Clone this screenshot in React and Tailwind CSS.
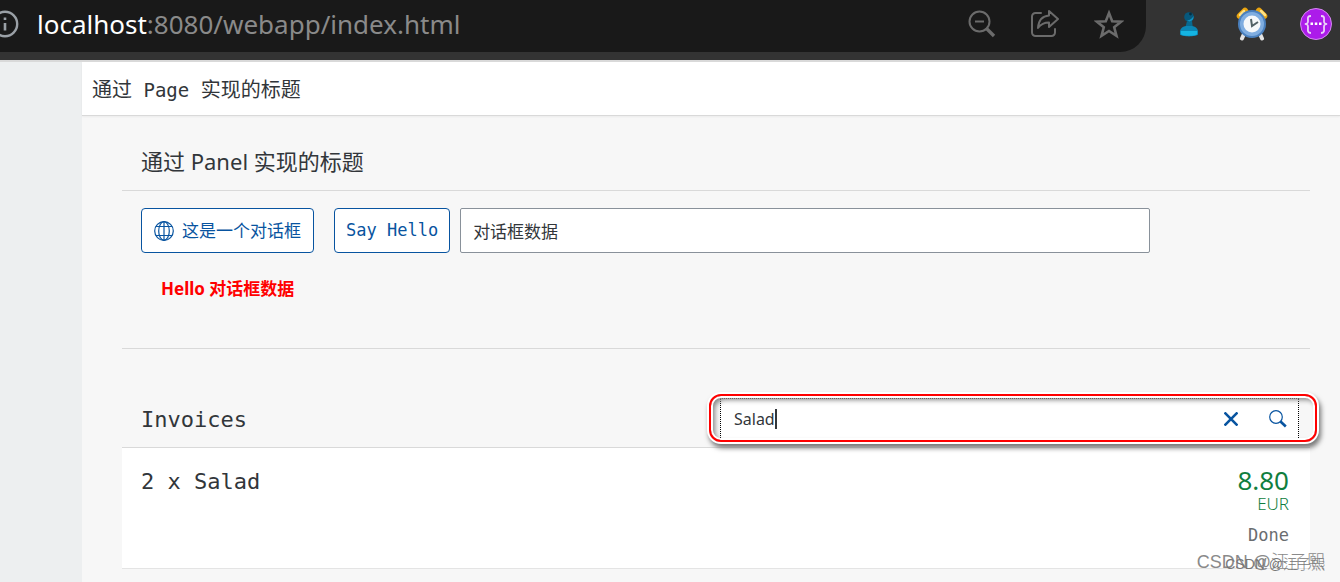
import { useState } from 'react';

const InfoIcon = () => (
  <svg viewBox="0 0 28 28" className="h-7 w-7 shrink-0" fill="none" stroke="#9aa0a6" strokeWidth="2.4">
    <circle cx="14" cy="14" r="12.2" />
    <path d="M14 13v7.5M14 7.5v2.6" strokeWidth="2.6" />
  </svg>
);

const ZoomOutIcon = () => (
  <svg viewBox="0 0 28 28" className="h-7 w-7" fill="none" stroke="#6b6b6b" strokeWidth="2">
    <circle cx="11.5" cy="11.5" r="10" />
    <path d="M7 11.5h9" />
    <path d="M18.5 18.5l7.5 7.5" strokeWidth="3.4" />
  </svg>
);

const ShareIcon = () => (
  <svg viewBox="0 0 28 28" className="h-7 w-7" fill="none" stroke="#6b6b6b" strokeWidth="2" strokeLinejoin="round" strokeLinecap="round">
    <path d="M10 3H4.500a3.500 3.500 0 0 0-3.500 3.500v16A3.500 3.500 0 0 0 4.500 26h16a3.500 3.500 0 0 0 3.500-3.500V19" />
    <path d="M18 1l9 8-9 8v-4.500c-5 0-8 1.500-11 5.500 .5-7.500 4.500-12 11-12.500z" />
  </svg>
);

const StarIcon = () => (
  <svg viewBox="0 0 30 30" className="h-[30px] w-[30px]" fill="none" stroke="#6b6b6b" strokeWidth="2.6">
    <path d="M15 4l3.200 8.200 8.800.5-6.800 5.600 2.300 8.600L15 22l-7.500 4.900 2.300-8.600L3 12.700l8.800-.5z" />
  </svg>
);

const StampIcon = () => (
  <svg viewBox="0 0 20 26" className="h-[26px] w-5">
    <path d="M8 10h5l1 8H6z" fill="#086a90" />
    <circle cx="10" cy="6" r="4.8" fill="#07587c" />
    <path d="M10 10.500c3 0 5-2.500 4.500-5.500-1.500 2.500-3 4-6.500 4.500z" fill="#0f94c4" />
    <circle cx="11.5" cy="3" r="1.4" fill="#043044" />
    <path d="M1 20c.5-3 3-4.500 6-5h6c3 .5 5.500 2 6 5v3.500c-2 2.500-16 2.500-18 0z" fill="#0b86b4" />
    <path d="M2 20h16v3.500c-3 1.800-13 1.800-16 0z" fill="#14b4e2" />
  </svg>
);

const ClockIcon = () => (
  <svg viewBox="0 0 32 34" className="h-[34px] w-8">
    <path d="M8 27l-2 4.500M24 27l2 4.500" stroke="#e4e4e4" strokeWidth="4" strokeLinecap="round" />
    <path d="M4 9l5-5M23 4l5 5" stroke="#eba50f" strokeWidth="6.5" strokeLinecap="round" />
    <path d="M4 8l4-4M25 4l4 4" stroke="#ffe184" strokeWidth="2.5" strokeLinecap="round" />
    <circle cx="16" cy="17" r="14" fill="#4a80be" />
    <circle cx="16" cy="17" r="12" fill="#7fade0" />
    <circle cx="16" cy="17" r="8.5" fill="#f5f8fa" />
    <path d="M15 12l1 7 6-4" fill="none" stroke="#526266" strokeWidth="2" />
  </svg>
);

const BracesIcon = () => (
  <svg viewBox="0 0 32 32" className="h-8 w-8">
    <circle cx="16" cy="16" r="15.5" fill="#ac1bea" stroke="#d58bee" />
    <path d="M11 8c-4 0-3 2-3 5s-1 2.500-3 3c2 .5 3 0 3 3s-1 6 3 6M21 8c4 0 3 2 3 5s1 2.500 3 3c-2 .5-3 0-3 3s1 6-3 6" fill="none" stroke="#ead0f8" strokeWidth="1.8" />
    <path d="M10.500 14.500h2.500v2.500h-2.500zM14.800 14.500h2.500v2.500h-2.500zM19 14.500h2.500v2.500h-2.500z" fill="#fff" />
  </svg>
);

const GlobeIcon = () => (
  <svg viewBox="0 0 20 20" className="h-5 w-5" fill="none" stroke="#0854a0" strokeWidth="1.2">
    <circle cx="10" cy="10" r="9.3" />
    <ellipse cx="10" cy="10" rx="5.3" ry="9.3" />
    <path d="M10 .7v18.600M1.800 5.500h16.400M1.800 14.500h16.400" />
  </svg>
);

const SearchIcon = () => (
  <svg viewBox="0 0 18 18" className="h-[18px] w-[18px]" fill="none" stroke="#0854a0">
    <circle cx="7" cy="7" r="6.3" strokeWidth="1.2" />
    <path d="M11.500 11.500l5.300 5" strokeWidth="2.6" />
  </svg>
);

const AddressBar = () => (
  <header className="flex h-[60px] bg-[#333333] font-['Noto_Sans',sans-serif]">
    <div className="flex h-[52px] min-w-0 grow items-center rounded-br-[26px] bg-[#191919] pr-[22px]">
      <div className="-ml-[9px] flex grow items-center gap-[18px] pb-1">
        <InfoIcon />
        <span className="text-[26px] leading-8 text-[#8a8a8a]">
          <span className="text-white">localhost</span>:8080/webapp/index.html
        </span>
      </div>
      <div className="flex items-center gap-[35px] pb-1">
        <button type="button" aria-label="Zoom out"><ZoomOutIcon /></button>
        <button type="button" aria-label="Share"><ShareIcon /></button>
        <button type="button" aria-label="Bookmark"><StarIcon /></button>
      </div>
    </div>
    <div className="flex h-12 shrink-0 items-center gap-8 pr-2 pl-[33px]">
      <button type="button" aria-label="Stamp" className="mr-[5px]"><StampIcon /></button>
      <button type="button" aria-label="Alarm"><ClockIcon /></button>
      <button type="button" aria-label="Braces"><BracesIcon /></button>
    </div>
  </header>
);

const HelloPanel = () => {
  const [name, setName] = useState('对话框数据');

  return (
    <section className="h-[233px] border-b border-[#d9d9d9]">
      <h2 className="flex h-[75px] items-center border-b border-[#d9d9d9] px-[19px] pt-[17px] text-[22px]">
        通过 Panel 实现的标题
      </h2>
      <div className="flex px-[19px] pt-[17px]">
        <button type="button" className="flex h-[45px] items-center gap-2 rounded border border-[#0854a0] bg-white px-3 text-[17px] text-[#0854a0]">
          <GlobeIcon />
          这是一个对话框
        </button>
        <button type="button" className="ml-5 h-[45px] rounded border border-[#0854a0] bg-white px-[11px] font-['DejaVu_Sans_Mono',monospace] text-[17px] text-[#0854a0]">
          Say Hello
        </button>
        <input
          aria-label="Name"
          value={name}
          onChange={(event) => setName(event.target.value)}
          className="ml-[10px] h-[45px] w-3/5 rounded-xs border border-[#89919a] bg-white px-3 text-[17px]"
        />
      </div>
      <p className="px-[39px] pt-6 text-[17px] leading-6 font-bold text-[#ff0000]">Hello {name}</p>
    </section>
  );
};

const SearchField = () => {
  const [query, setQuery] = useState('Salad');

  return (
    <div className="relative mb-[2px] flex h-[40px] w-[579px] items-center border border-b-0 border-dotted border-black bg-white pr-[11px] pl-[13px]">
      <div className="pointer-events-none absolute -top-[5px] -right-[19px] -bottom-[4px] -left-[12px] rounded-[12px] border-2 border-[#ff0000] shadow-[0_0_0_2px_white,2px_4px_5px_2px_#777,inset_0_0_0_2px_white,inset_3px_3px_5px_1px_#888]" />
      <div className="flex grow items-center">
        <input
          aria-label="Search invoices"
          value={query}
          onChange={(event) => setQuery(event.target.value)}
          className="field-sizing-content text-base outline-none"
        />
        <span className="h-5 w-0.5 bg-[#32363a]" />
      </div>
      <button type="button" aria-label="Clear" className="mr-[31px]">
        <svg viewBox="0 0 14 14" className="h-[14px] w-[14px]" stroke="#0854a0" strokeWidth="2.6">
          <path d="M.5 .5l13 13M13.500 .5l-13 13" />
        </svg>
      </button>
      <button type="button" aria-label="Search"><SearchIcon /></button>
    </div>
  );
};

const Invoices = () => (
  <section className="pt-[42px]">
    <div className="flex h-[57px] items-center justify-between border-b border-[#d9d9d9] pr-[11px] pl-[19px]">
      <h2 className="font-['DejaVu_Sans_Mono',monospace] text-[22px]">Invoices</h2>
      <SearchField />
    </div>
    <ul>
      <li className="flex h-[121px] justify-between border-b border-[#e4e4e4] bg-white pt-4 pr-[21px] pl-[19px]">
        <span className="pt-[2px] font-['DejaVu_Sans_Mono',monospace] text-[22px] leading-8">2 x Salad</span>
        <div className="flex flex-col items-end">
          <span className="text-[26px] leading-8 text-[#107e3e]">8.80</span>
          <span className="text-[17px] leading-4 font-light text-[#107e3e]">EUR</span>
          <span className="pt-[11px] font-['DejaVu_Sans_Mono',monospace] text-[17px] leading-6 text-[#6a6d70]">Done</span>
        </div>
      </li>
    </ul>
  </section>
);

const App = () => (
  <div className="relative min-h-screen overflow-hidden bg-[#edeff0] text-[#32363a]">
    <AddressBar />
    <div className="border-t-2 border-[#d9d9d9] pl-[82px] font-['Noto_Sans','Noto_Sans_CJK_SC',sans-serif]">
      <main className="min-h-[520px] bg-[#f7f7f7]">
        <h1 className="flex h-[54px] items-center border-b border-[#d9d9d9] bg-white px-[10px] pt-[2px] text-xl shadow-xs">
          <span className="whitespace-pre">
            通过<span className="font-['DejaVu_Sans_Mono',monospace] text-[19px]"> Page </span>实现的标题
          </span>
        </h1>
        <div className="pr-[30px] pl-10">
          <HelloPanel />
          <Invoices />
        </div>
      </main>
    </div>
    <div className="absolute right-[15px] bottom-1 font-['Liberation_Sans','Noto_Sans_CJK_SC',sans-serif] text-lg leading-8 font-light text-[#8a8a8a]">
      CSDN @汪子熙
      <span className="absolute right-0 bottom-0 text-sm leading-7 whitespace-nowrap text-[#777777]">CSDN @汪子熙</span>
    </div>
  </div>
);

export default App;
